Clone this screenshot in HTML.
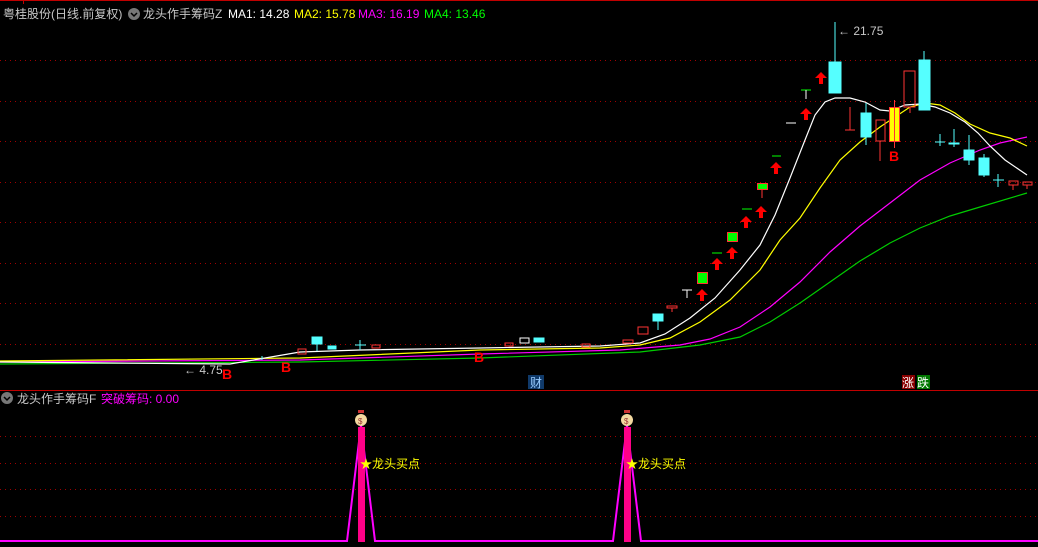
<!DOCTYPE html>
<html><head><meta charset="utf-8"><style>
body{margin:0;background:#000;width:1038px;height:547px;overflow:hidden;font-family:"Liberation Sans","Noto Sans CJK SC",sans-serif}
svg{position:absolute;left:0;top:0}
.t{font-family:"Liberation Sans","Noto Sans CJK SC",sans-serif;font-size:12px}
</style></head><body>
<svg width="1038" height="547" viewBox="0 0 1038 547">
<rect width="1038" height="547" fill="#000"/>
<line x1="0" y1="0.5" x2="1038" y2="0.5" stroke="#c00000"/>
<line x1="23.5" y1="0" x2="23.5" y2="4" stroke="#c00000"/>
<g stroke="#a00000" stroke-dasharray="1,4">
<line x1="0" y1="60.5" x2="1038" y2="60.5"/><line x1="0" y1="101.5" x2="1038" y2="101.5"/>
<line x1="0" y1="141.5" x2="1038" y2="141.5"/><line x1="0" y1="182.5" x2="1038" y2="182.5"/>
<line x1="0" y1="222.5" x2="1038" y2="222.5"/><line x1="0" y1="263.5" x2="1038" y2="263.5"/>
<line x1="0" y1="303.5" x2="1038" y2="303.5"/><line x1="0" y1="344.5" x2="1038" y2="344.5"/>
<line x1="0" y1="436.5" x2="1038" y2="436.5"/><line x1="0" y1="463.5" x2="1038" y2="463.5"/>
<line x1="0" y1="489.5" x2="1038" y2="489.5"/><line x1="0" y1="516.5" x2="1038" y2="516.5"/>
</g>
<line x1="0" y1="390.5" x2="1038" y2="390.5" stroke="#c00000"/>
<!-- header -->
<text class="t" x="3" y="18" fill="#c8c8c8">粤桂股份(日线.前复权)</text>
<circle cx="134" cy="14" r="6" fill="#777"/><path d="M131 13l3 3 3-3" stroke="#000" stroke-width="1.5" fill="none"/>
<text class="t" x="143" y="18" fill="#c8c8c8">龙头作手筹码Z</text>
<text class="t" x="228" y="18" fill="#fff">MA1: 14.28</text>
<text class="t" x="294" y="18" fill="#ff0">MA2: 15.78</text>
<text class="t" x="358" y="18" fill="#f0f">MA3: 16.19</text>
<text class="t" x="424" y="18" fill="#0f0">MA4: 13.46</text>
<!-- MA lines -->
<polyline fill="none" stroke="#0c0" stroke-width="1.2" points="0,364 300,362 480,358 640,352 700,345 740,337 770,322 800,303 830,282 860,261 890,243 920,228 950,216 980,207 1027,193"/>
<polyline fill="none" stroke="#f0f" stroke-width="1.2" points="0,362 300,360 480,354 620,350 680,345 710,339 740,327 770,307 800,282 830,252 860,226 890,203 920,180 950,163 980,150 1000,143 1027,137"/>
<polyline fill="none" stroke="#ff0" stroke-width="1.2" points="0,361 300,358 480,350 600,348 640,345 670,338 700,322 730,300 760,270 780,240 800,218 820,188 840,160 860,142 880,127 895,117 910,107 925,103 940,105 955,113 970,124 990,133 1010,138 1027,146"/>
<polyline fill="none" stroke="#fff" stroke-width="1.2" points="0,362 230,364 300,352 360,350 480,348 600,346 640,343 665,334 690,318 715,298 740,270 760,245 775,215 790,178 805,140 815,115 825,102 835,98 850,98 865,102 880,110 890,111 905,105 920,104 935,107 950,113 965,122 978,133 990,146 1005,160 1027,175"/>
<!-- left small candles -->
<g stroke="#f33" fill="none">
<rect x="298" y="349" width="8" height="5"/><rect x="372" y="345" width="8" height="3"/><rect x="505" y="343" width="8" height="3"/><rect x="582" y="344" width="8" height="3"/>
<rect x="623" y="340" width="10" height="3"/><rect x="638" y="327" width="10" height="7"/><rect x="667" y="306" width="10" height="2"/>
<rect x="876" y="120" width="9" height="21"/><line x1="880" y1="141" x2="880" y2="161"/>
<rect x="904" y="71" width="11" height="36"/><line x1="910" y1="107" x2="910" y2="113"/>
<rect x="1009" y="181" width="9" height="4"/><line x1="1013" y1="185" x2="1013" y2="190"/>
<rect x="1023" y="182" width="9" height="3"/><line x1="1027" y1="185" x2="1027" y2="189"/>
<line x1="850" y1="107" x2="850" y2="130"/><line x1="845" y1="130" x2="855" y2="130"/>
<line x1="672" y1="308" x2="672" y2="312"/>
</g>
<g fill="#5ff" stroke="#5ff">
<rect x="312" y="337" width="10" height="7"/><line x1="317" y1="344" x2="317" y2="351"/>
<rect x="328" y="346" width="8" height="3"/><line x1="360" y1="340" x2="360" y2="350"/><line x1="355" y1="345" x2="366" y2="345"/>
<rect x="534" y="338" width="10" height="4"/>
<rect x="653" y="314" width="10" height="7"/><line x1="658" y1="321" x2="658" y2="330"/>
<rect x="829" y="62" width="12" height="31"/><line x1="835" y1="62" x2="835" y2="22"/>
<rect x="861" y="113" width="10" height="24"/><line x1="866" y1="103" x2="866" y2="145"/>
<rect x="919" y="60" width="11" height="50"/><line x1="924" y1="60" x2="924" y2="51"/>
<line x1="940" y1="134" x2="940" y2="146"/><line x1="935" y1="142" x2="945" y2="142"/>
<line x1="954" y1="129" x2="954" y2="147"/><rect x="949" y="143" width="10" height="1"/>
<rect x="964" y="150" width="10" height="10"/><line x1="969" y1="135" x2="969" y2="165"/>
<rect x="979" y="158" width="10" height="17"/><line x1="984" y1="154" x2="984" y2="177"/>
<line x1="998" y1="174" x2="998" y2="187"/><line x1="993" y1="180" x2="1004" y2="180"/>
<line x1="262" y1="356" x2="262" y2="360"/>
</g>
<rect x="520" y="338" width="9" height="5" fill="none" stroke="#fff"/>
<rect x="889.5" y="107.5" width="10" height="34" fill="#ff0" stroke="#f33"/><line x1="894.5" y1="100" x2="894.5" y2="148" stroke="#f33"/>
<!-- green candles -->
<g fill="#0f0" stroke="#f33">
<rect x="697.5" y="272.5" width="10" height="11"/><rect x="727.5" y="232.5" width="10" height="9"/><rect x="757.5" y="183.5" width="10" height="6"/>
</g>
<g stroke="#f33"><line x1="762" y1="190" x2="762" y2="198"/></g>
<g stroke="#0f0"><line x1="712" y1="253" x2="722" y2="253"/><line x1="742" y1="209" x2="752" y2="209"/><line x1="772" y1="156" x2="781" y2="156"/><line x1="801" y1="90" x2="811" y2="90"/></g>
<g stroke="#fff"><line x1="682" y1="290" x2="692" y2="290"/><line x1="687" y1="290" x2="687" y2="298"/><line x1="786" y1="123" x2="796" y2="123"/><line x1="806" y1="90" x2="806" y2="99"/></g>
<!-- arrows -->
<g fill="#f00">
<path d="M0 0l-6 6h4v6h4v-6h4z" transform="translate(702,289)"/>
<path d="M0 0l-6 6h4v6h4v-6h4z" transform="translate(717,258)"/>
<path d="M0 0l-6 6h4v6h4v-6h4z" transform="translate(732,247)"/>
<path d="M0 0l-6 6h4v6h4v-6h4z" transform="translate(746,216)"/>
<path d="M0 0l-6 6h4v6h4v-6h4z" transform="translate(761,206)"/>
<path d="M0 0l-6 6h4v6h4v-6h4z" transform="translate(776,162)"/>
<path d="M0 0l-6 6h4v6h4v-6h4z" transform="translate(806,108)"/>
<path d="M0 0l-6 6h4v6h4v-6h4z" transform="translate(821,72)"/>
</g>
<text class="t" x="838" y="35" fill="#c8c8c8">← 21.75</text>
<text class="t" x="184" y="374" fill="#c8c8c8">← 4.75</text>
<g fill="#f00" font-weight="bold" class="t" font-size="14"><text x="222" y="379" font-size="14">B</text><text x="281" y="372" font-size="14">B</text><text x="474" y="362" font-size="14">B</text><text x="889" y="161" font-size="14">B</text></g>
<rect x="528" y="375" width="16" height="14" fill="#103a6a"/><text class="t" x="530" y="387" fill="#9cf">财</text>
<rect x="902" y="375" width="13" height="14" fill="#800"/><text class="t" x="902" y="387" fill="#fff">涨</text>
<rect x="917" y="375" width="13" height="14" fill="#070"/><text class="t" x="917" y="387" fill="#fff">跌</text>
<!-- lower pane -->
<circle cx="7" cy="398" r="6" fill="#777"/><path d="M4 397l3 3 3-3" stroke="#000" stroke-width="1.5" fill="none"/>
<text class="t" x="17" y="403" fill="#c8c8c8">龙头作手筹码F</text>
<text class="t" x="101" y="403" fill="#f0f">突破筹码: 0.00</text>
<polyline fill="none" stroke="#f0f" stroke-width="2" points="0,541 347,541 361,425 375,541 613,541 627,425 641,541 1038,541"/>
<rect x="358" y="427" width="7" height="115" fill="#f08"/>
<rect x="624" y="427" width="7" height="115" fill="#f08"/>
<g><circle cx="361" cy="420" r="6" fill="#f3d9a0"/><rect x="358" y="410" width="6" height="3" fill="#c33"/><text x="358" y="424" font-size="8" fill="#933">$</text></g>
<g><circle cx="627" cy="420" r="6" fill="#f3d9a0"/><rect x="624" y="410" width="6" height="3" fill="#c33"/><text x="624" y="424" font-size="8" fill="#933">$</text></g>
<text class="t" x="360" y="468" fill="#ff0">★龙头买点</text>
<text class="t" x="626" y="468" fill="#ff0">★龙头买点</text>
</svg>
</body></html>
